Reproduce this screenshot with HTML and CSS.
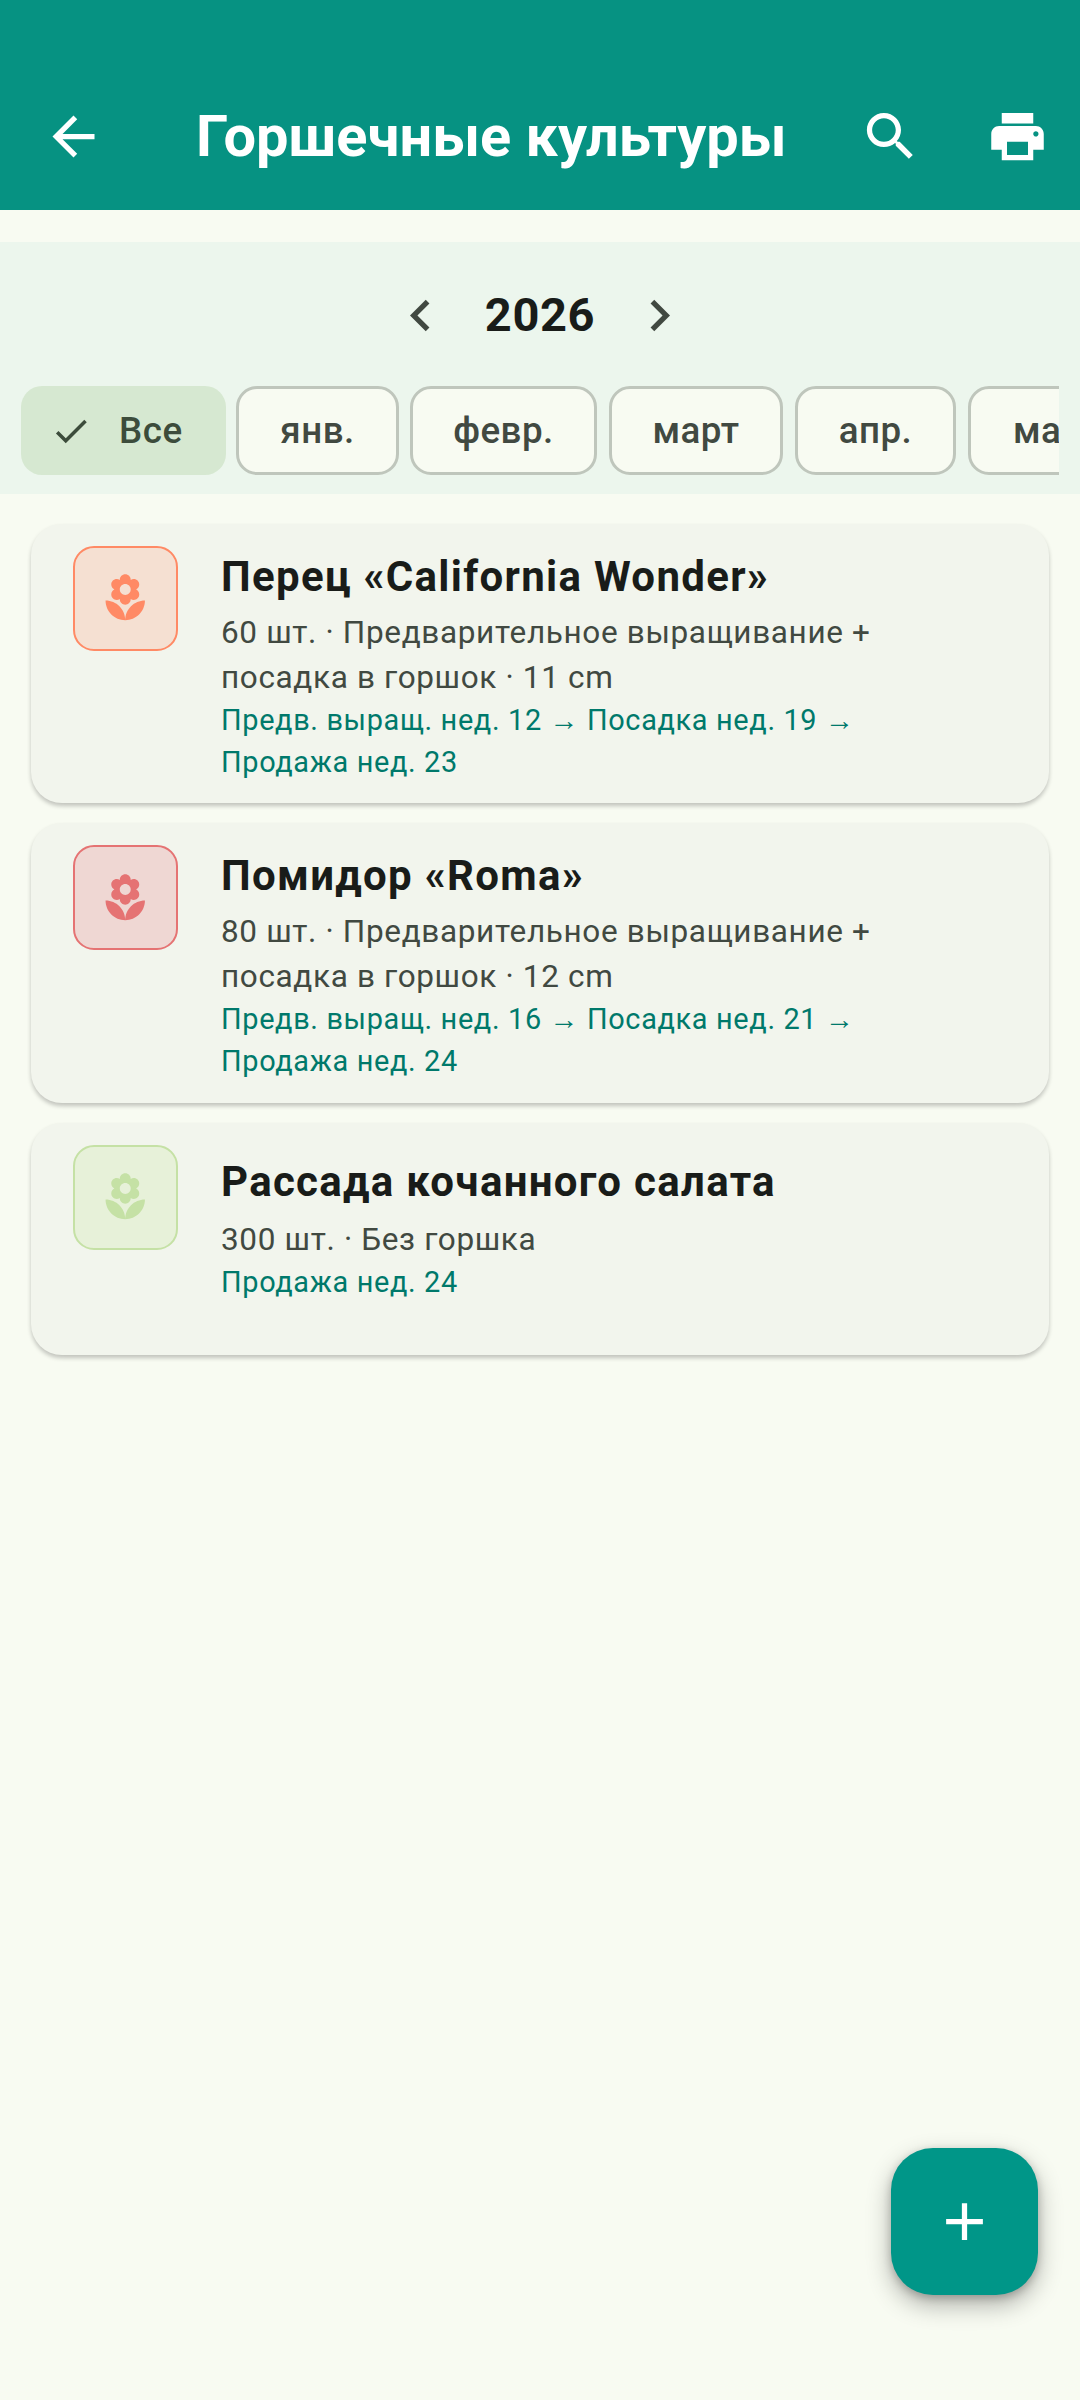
FILE: index.html
```html
<!DOCTYPE html>
<html lang="ru">
<head>
<meta charset="utf-8">
<title>Горшечные культуры</title>
<link rel="stylesheet" href="styles.css">
</head>
<body>
<div class="screen">
  <header class="appbar">
    <button class="icon-btn back" aria-label="Назад"><svg viewBox="0 0 24 24"><path d="M20 11H7.83l5.59-5.59L12 4l-8 8 8 8 1.41-1.41L7.83 13H20v-2z"/></svg></button>
    <h1 class="appbar-title">Горшечные культуры</h1>
    <button class="icon-btn search" aria-label="Поиск"><svg viewBox="0 0 24 24"><path d="M15.5 14h-.79l-.28-.27C15.41 12.59 16 11.11 16 9.5 16 5.91 13.09 3 9.5 3S3 5.91 3 9.5 5.91 16 9.5 16c1.61 0 3.09-.59 4.23-1.57l.27.28v.79l5 4.99L20.49 19l-4.99-5zm-6 0C7.01 14 5 11.99 5 9.5S7.01 5 9.5 5 14 7.01 14 9.5 11.99 14 9.5 14z"/></svg></button>
    <button class="icon-btn print" aria-label="Печать"><svg viewBox="0 0 24 24"><path d="M19 8H5c-1.66 0-3 1.34-3 3v6h4v4h12v-4h4v-6c0-1.66-1.34-3-3-3zm-3 11H8v-5h8v5zm3-7c-.55 0-1-.45-1-1s.45-1 1-1 1 .45 1 1-.45 1-1 1zm-1-9H6v4h12V3z"/></svg></button>
  </header>

  <section class="filters">
    <div class="year-row">
      <svg class="chevron" viewBox="0 0 24 24"><path d="M15.41 7.41 14 6l-6 6 6 6 1.41-1.41L10.83 12z"/></svg>
      <span class="year">2026</span>
      <svg class="chevron" viewBox="0 0 24 24"><path d="M10 6 8.59 7.41 13.17 12l-4.58 4.59L10 18l6-6z"/></svg>
    </div>
    <div class="chips">
      <span class="chip chip-on"><svg class="check" viewBox="0 0 24 24"><path d="M9 16.17 4.83 12l-1.42 1.41L9 19 21 7l-1.41-1.41z"/></svg>Все</span>
      <span class="chip w-jan">янв.</span>
      <span class="chip w-feb">февр.</span>
      <span class="chip w-mar">март</span>
      <span class="chip w-apr">апр.</span>
      <span class="chip w-may">май</span>
    </div>
  </section>

  <main class="list">
    <article class="card card-tall">
      <div class="thumb thumb-orange"><svg viewBox="0 0 24 24"><path d="M12 22c4.97 0 9-4.03 9-9-4.97 0-9 4.03-9 9zM5.6 10.25c0 1.38 1.12 2.5 2.5 2.5.53 0 1.01-.16 1.42-.44l-.02.19c0 1.38 1.12 2.5 2.5 2.5s2.5-1.12 2.5-2.5l-.02-.19c.4.28.89.44 1.42.44 1.38 0 2.5-1.12 2.5-2.5 0-1-.59-1.85-1.43-2.25.84-.4 1.43-1.25 1.43-2.25 0-1.38-1.12-2.5-2.5-2.5-.53 0-1.01.16-1.42.44l.02-.19C14.5 2.12 13.38 1 12 1S9.5 2.12 9.5 3.5l.02.19c-.4-.28-.89-.44-1.42-.44-1.38 0-2.5 1.12-2.5 2.5 0 1 .59 1.85 1.43 2.25-.84.4-1.43 1.25-1.43 2.25zM12 5.5c1.38 0 2.5 1.12 2.5 2.5s-1.12 2.5-2.5 2.5S9.5 9.38 9.5 8s1.12-2.5 2.5-2.5zM3 13c0 4.97 4.03 9 9 9 0-4.97-4.03-9-9-9z"/></svg></div>
      <div class="card-body">
        <h2 class="card-title">Перец «California Wonder»</h2>
        <p class="card-meta">60 шт. · Предварительное выращивание + посадка в горшок · 11 cm</p>
        <p class="card-plan">Предв. выращ. нед. 12 → Посадка нед. 19 → Продажа нед. 23</p>
      </div>
    </article>
    <article class="card card-tall">
      <div class="thumb thumb-red"><svg viewBox="0 0 24 24"><path d="M12 22c4.97 0 9-4.03 9-9-4.97 0-9 4.03-9 9zM5.6 10.25c0 1.38 1.12 2.5 2.5 2.5.53 0 1.01-.16 1.42-.44l-.02.19c0 1.38 1.12 2.5 2.5 2.5s2.5-1.12 2.5-2.5l-.02-.19c.4.28.89.44 1.42.44 1.38 0 2.5-1.12 2.5-2.5 0-1-.59-1.85-1.43-2.25.84-.4 1.43-1.25 1.43-2.25 0-1.38-1.12-2.5-2.5-2.5-.53 0-1.01.16-1.42.44l.02-.19C14.5 2.12 13.38 1 12 1S9.5 2.12 9.5 3.5l.02.19c-.4-.28-.89-.44-1.42-.44-1.38 0-2.5 1.12-2.5 2.5 0 1 .59 1.85 1.43 2.25-.84.4-1.43 1.25-1.43 2.25zM12 5.5c1.38 0 2.5 1.12 2.5 2.5s-1.12 2.5-2.5 2.5S9.5 9.38 9.5 8s1.12-2.5 2.5-2.5zM3 13c0 4.97 4.03 9 9 9 0-4.97-4.03-9-9-9z"/></svg></div>
      <div class="card-body">
        <h2 class="card-title">Помидор «Roma»</h2>
        <p class="card-meta">80 шт. · Предварительное выращивание + посадка в горшок · 12 cm</p>
        <p class="card-plan">Предв. выращ. нед. 16 → Посадка нед. 21 → Продажа нед. 24</p>
      </div>
    </article>
    <article class="card card-short">
      <div class="thumb thumb-green"><svg viewBox="0 0 24 24"><path d="M12 22c4.97 0 9-4.03 9-9-4.97 0-9 4.03-9 9zM5.6 10.25c0 1.38 1.12 2.5 2.5 2.5.53 0 1.01-.16 1.42-.44l-.02.19c0 1.38 1.12 2.5 2.5 2.5s2.5-1.12 2.5-2.5l-.02-.19c.4.28.89.44 1.42.44 1.38 0 2.5-1.12 2.5-2.5 0-1-.59-1.85-1.43-2.25.84-.4 1.43-1.25 1.43-2.25 0-1.38-1.12-2.5-2.5-2.5-.53 0-1.01.16-1.42.44l.02-.19C14.5 2.12 13.38 1 12 1S9.5 2.12 9.5 3.5l.02.19c-.4-.28-.89-.44-1.42-.44-1.38 0-2.5 1.12-2.5 2.5 0 1 .59 1.85 1.43 2.25-.84.4-1.43 1.25-1.43 2.25zM12 5.5c1.38 0 2.5 1.12 2.5 2.5s-1.12 2.5-2.5 2.5S9.5 9.38 9.5 8s1.12-2.5 2.5-2.5zM3 13c0 4.97 4.03 9 9 9 0-4.97-4.03-9-9-9z"/></svg></div>
      <div class="card-body">
        <h2 class="card-title">Рассада кочанного салата</h2>
        <p class="card-meta">300 шт. · Без горшка</p>
        <p class="card-plan">Продажа нед. 24</p>
      </div>
    </article>
  </main>

  <button class="fab" aria-label="Добавить"><svg viewBox="0 0 24 24"><path d="M19 13h-6v6h-2v-6H5v-2h6V5h2v6h6v2z"/></svg></button>
</div>
</body>
</html>
```

FILE: styles.css
```css
* { box-sizing: border-box; }
html, body { margin: 0; padding: 0; }
body {
  width: 1080px;
  height: 2400px;
  overflow: hidden;
  background: #f8fbf2;
  font-family: Roboto, "Noto Sans", sans-serif;
}
.screen { position: relative; width: 1080px; height: 2400px; overflow: hidden; }

.appbar {
  height: 210px;
  background: #069282;
  padding: 63px 0 0 42px;
  display: flex;
  align-items: center;
  color: #fff;
}
.icon-btn {
  border: 0; padding: 0; background: none;
  width: 63px; height: 63px;
  display: block;
  flex: none;
}
.icon-btn svg { display: block; width: 63px; height: 63px; fill: #fff; }
.appbar-title {
  margin: 0 0 0 91px;
  width: 663px;
  font-size: 57.75px;
  line-height: 63px;
  font-weight: 700;
  letter-spacing: 0;
  white-space: nowrap;
}
.print { margin-left: 64px; }

.filters {
  margin-top: 32px;
  height: 252px;
  background: #ecf6ed;
  padding: 40px 21px 0;
}
.year-row {
  height: 66px;
  display: flex;
  align-items: center;
  justify-content: center;
  gap: 33px;
}
.chevron { width: 63px; height: 63px; fill: #414941; flex: none; }
.year { font-size: 47px; line-height: 66px; font-weight: 700; color: #191c19; letter-spacing: .6px; }
.chips {
  margin-top: 38px;
  display: flex;
  gap: 10px;
  overflow: hidden;
  height: 89px;
  width: 1038px;
}
.chip {
  flex: none;
  height: 89px;
  border-radius: 21px;
  border: 3px solid #bfc6bc;
  background: #f8fbf2;
  display: flex;
  align-items: center;
  justify-content: center;
  font-size: 36.75px;
  font-weight: 500;
  letter-spacing: .5px;
  color: #414941;
  padding: 0;
}
.chip-on {
  background: #d6e8d1;
  border: 0;
  color: #3c4c3b;
  width: 205px;
  padding: 0 0 0 29px;
  justify-content: flex-start;
  gap: 27px;
}
.check { width: 42px; height: 42px; fill: #3c4c3b; }
.w-jan { width: 163px; }
.w-feb { width: 187px; margin-left: 1px; }
.w-mar { width: 174px; margin-left: 2px; }
.w-apr { width: 161px; margin-left: 2px; }
.w-may { width: 160px; margin-left: 2px; justify-content: flex-start; padding-left: 42px; }

.list {
  padding: 29.5px 31px 0;
  display: flex;
  flex-direction: column;
  gap: 20.5px;
}
.card {
  display: flex;
  gap: 43px;
  padding: 22px 42px 0;
  background: #f2f5ed;
  border-radius: 31px;
  box-shadow: 0 3px 4px rgba(0,0,0,.22);
}
.card-tall { height: 279.25px; }
.card-short { height: 232px; }
.card-short .card-body { padding-top: 6px; }
.card-short .card-meta { margin-top: 7px; }
.card-body { min-width: 0; }
.thumb {
  flex: none;
  width: 105px; height: 105px;
  border-radius: 21px;
  border: 2.6px solid;
  display: flex;
  align-items: center;
  justify-content: center;
}
.thumb svg { width: 52.5px; height: 52.5px; fill: currentColor; }
.thumb-orange { color: #ff8a65; background: #f5e0d2; }
.thumb-red { color: #e57373; background: #efd7d3; }
.thumb-green { color: #c5e1a5; background: #e7f1d9; }
.card-title {
  margin: 0;
  padding-top: 3px;
  font-size: 42px;
  line-height: 56px;
  font-weight: 700;
  letter-spacing: 1.3px;
  color: #191c19;
}
.card-meta {
  margin: 5px 0 0;
  width: 700px;
  font-size: 31.5px;
  line-height: 45px;
  letter-spacing: .65px;
  color: #414941;
}
.card-plan {
  margin: -1px 0 0;
  width: 660px;
  font-size: 28.9px;
  line-height: 42px;
  letter-spacing: .65px;
  color: #00796b;
}

.fab {
  position: absolute;
  left: 891px;
  top: 2148px;
  width: 147px;
  height: 147px;
  border: 0;
  padding: 0;
  border-radius: 42px;
  background: #009688;
  box-shadow: 0 10px 24px rgba(0,0,0,.3), 0 3px 8px rgba(0,0,0,.2);
  display: flex;
  align-items: center;
  justify-content: center;
}
.fab svg { width: 63px; height: 63px; fill: #fff; }
```
